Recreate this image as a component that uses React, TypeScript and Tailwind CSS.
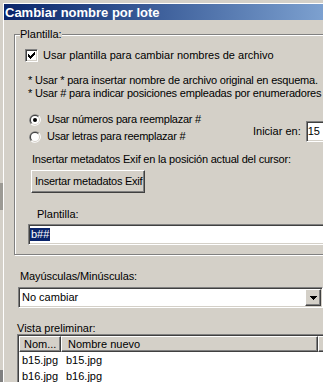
import React from "react";

// Win2000-style bevels
const sunken =
  "border border-[#808080] border-b-white border-r-white shadow-[inset_1px_1px_0_#404040,inset_-1px_-1px_0_#d4d0c8]";
const raised =
  "border border-white border-b-[#404040] border-r-[#404040] shadow-[inset_-1px_-1px_0_#808080]";

const Checkbox = () => (
  <div className={`w-[13px] h-[13px] shrink-0 bg-white ${sunken}`}>
    <svg width="9" height="9" viewBox="0 0 9 9" className="ml-[1px] mt-[1px]">
      <path d="M1 3h1v1h1v1h1V4h1V3h1V2h1V1h1v3H7v1H6v1H5v1H4v1H3V7H2V6H1z" fill="#000" />
    </svg>
  </div>
);

const Radio = ({ checked }: { checked?: boolean }) => (
  <svg width="12" height="12" viewBox="0 0 12 12" className="shrink-0">
    <path d="M1.76 10.24A6 6 0 0 1 10.24 1.76Z" fill="#808080" />
    <path d="M10.24 1.76A6 6 0 0 1 1.76 10.24Z" fill="#ffffff" />
    <path d="M2.46 9.54A5 5 0 0 1 9.54 2.46Z" fill="#404040" />
    <path d="M9.54 2.46A5 5 0 0 1 2.46 9.54Z" fill="#d4d0c8" />
    <circle cx="6" cy="6" r="4" fill="#fff" />
    {checked && <circle cx="6" cy="6" r="2" fill="#000" />}
  </svg>
);

const BackdropEdge = () => (
  <div className="w-[3px] shrink-0 flex flex-col bg-[#d4d0c8]">
    <div className="h-[183px]" />
    <div className="h-[27px] bg-[#9c9a94]" />
    <div className="h-[160px]" />
    <div className="h-[12px] bg-[#808080]" />
  </div>
);

export default function App() {
  return (
    <div className="w-[323px] h-[382px] overflow-hidden flex bg-[#d4d0c8] text-black text-[11px] leading-none font-['Liberation_Sans',Arial,sans-serif] whitespace-nowrap">
      <BackdropEdge />
      <div className="shrink-0 w-[420px] pt-[3px] flex flex-col">
        <div className="flex-1 flex flex-col border-l border-t border-white">
          {/* Title bar */}
          <div className="h-[16px] flex items-center pl-[1px] bg-linear-to-r from-[#0a246a] to-[#a6caf0] text-white font-bold text-[13px]">
            Cambiar nombre por lote
          </div>

          {/* Plantilla group */}
          <fieldset className="ml-[10px] mt-[8px] w-[340px] min-w-0 pb-[9px] border border-[#808080] shadow-[1px_1px_0_#fff,inset_1px_1px_0_#fff]">
            <legend className="ml-[5px] px-0 leading-[13px] bg-[#d4d0c8]">Plantilla:</legend>

            <div className="mt-[8px] ml-[10px] h-[13px] flex items-center gap-[5px]">
              <Checkbox />
              <span>Usar plantilla para cambiar nombres de archivo</span>
            </div>

            <div className="mt-[12px] ml-[13px] leading-[13px] tracking-[-0.2px]">
              <p>* Usar * para insertar nombre de archivo original en esquema.</p>
              <p>* Usar # para indicar posiciones empleadas por enumeradores</p>
            </div>

            <div className="mt-[11px] flex">
              <div className="ml-[14px] w-[224px] flex flex-col tracking-[-0.25px]">
                <div className="h-[17px] flex items-center gap-[6px]">
                  <Radio checked />
                  <span>Usar números para reemplazar #</span>
                </div>
                <div className="h-[17px] flex items-center gap-[6px]">
                  <Radio />
                  <span>Usar letras para reemplazar #</span>
                </div>
              </div>
              <div className="mt-[10px] h-[21px] flex items-center">
                <span>Iniciar en:</span>
                <div className={`ml-[5px] w-[40px] h-[21px] bg-white flex items-center pl-[1px] ${sunken}`}>15</div>
              </div>
            </div>

            <div className="mt-[8px] ml-[17px] h-[13px] flex items-center tracking-[-0.2px]">
              Insertar metadatos Exif en la posición actual del cursor:
            </div>

            <button
              className={`mt-[4px] ml-[16px] w-[114px] h-[23px] flex items-center pl-[3px] bg-[#d4d0c8] overflow-hidden tracking-[-0.25px] ${raised}`}
            >
              Insertar metadatos Exif
            </button>

            <div className="mt-[15px] ml-[22px] h-[13px] flex items-center">Plantilla:</div>

            <div className={`mt-[3px] ml-[13px] w-[320px] h-[21px] bg-white flex items-center pl-[1px] ${sunken}`}>
              <span className="bg-[#0a246a] text-white leading-[13px] px-[1px]">b##</span>
            </div>
          </fieldset>

          <div className="mt-[15px] ml-[16px] h-[13px] flex items-center tracking-[-0.1px]">Mayúsculas/Minúsculas:</div>

          <div className={`mt-[4px] ml-[14px] w-[305px] h-[21px] bg-white flex items-center ${sunken}`}>
            <span className="flex-1 pl-[3px]">No cambiar</span>
            <div className={`w-[16px] h-[17px] mr-[1px] bg-[#d4d0c8] flex items-center justify-center ${raised}`}>
              <svg width="7" height="4" viewBox="0 0 7 4">
                <path d="M0 0h7v1H6v1H5v1H4v1H3V3H2V2H1V1H0z" fill="#000" />
              </svg>
            </div>
          </div>

          <div className="mt-[15px] ml-[13px] h-[11px] flex items-center">Vista preliminar:</div>

          <div className={`ml-[13px] w-[330px] h-[70px] bg-white flex flex-col ${sunken} p-[1px]`}>
            <div className="h-[16px] flex bg-[#d4d0c8]">
              <div className={`w-[42px] flex items-center pl-[4px] overflow-hidden ${raised}`}>Nom...</div>
              <div className={`w-[257px] flex items-center pl-[6px] ${raised}`}>Nombre nuevo</div>
              <div className={`flex-1 ${raised}`} />
            </div>
            <div className="h-[16px] flex items-center">
              <span className="w-[42px] pl-[3px]">b15.jpg</span>
              <span className="pl-[5px]">b15.jpg</span>
            </div>
            <div className="h-[16px] flex items-center">
              <span className="w-[42px] pl-[3px]">b16.jpg</span>
              <span className="pl-[5px]">b16.jpg</span>
            </div>
          </div>
        </div>
      </div>
    </div>
  );
}
